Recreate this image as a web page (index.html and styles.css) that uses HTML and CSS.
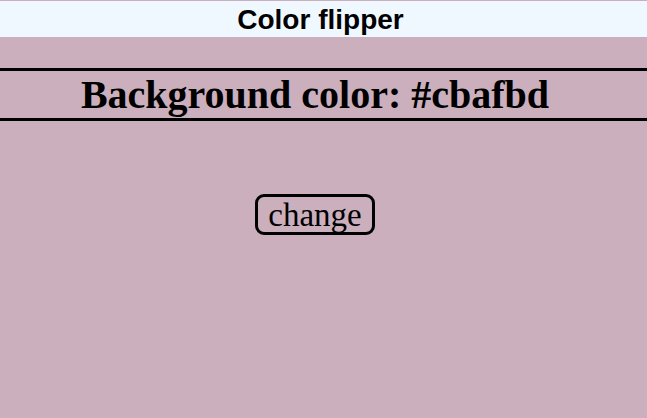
FILE: index.html
```html
<!DOCTYPE html>
<html>
<head>
<meta charset="utf-8">
<link rel="stylesheet" href="styles.css">
</head>
<body>
<header class="top-bar">Color flipper</header>
<main class="stage">
  <h1 class="color-title">Background color: #cbafbd</h1>
  <button class="change-btn">change</button>
</main>
</body>
</html>
```
FILE: styles.css
```css
html, body {
  margin: 0;
  padding: 0;
}
body {
  background: #cbafbd;
  padding-top: 1px;
  min-height: 417px;
}
.top-bar {
  background: #f0f8ff;
  height: 36px;
  box-sizing: border-box;
  padding-top: 2px;
  line-height: 34px;
  text-align: center;
  font-family: "Liberation Sans", Arial, sans-serif;
  font-weight: bold;
  font-size: 28px;
  padding-right: 6px;
  color: #000;
  overflow: hidden;
}
.stage {
  display: flex;
  flex-direction: column;
  align-items: center;
  padding-right: 17px;
}
.color-title {
  align-self: stretch;
  margin: 31px -17px 0 0;
  padding-right: 17px;
  border-top: 3px solid #000;
  border-bottom: 3px solid #000;
  font-family: "Liberation Serif", "Times New Roman", serif;
  font-weight: bold;
  font-size: 40px;
  line-height: 47px;
  text-align: center;
  color: #000;
}
.change-btn {
  margin-top: 73px;
  font-family: "Liberation Serif", "Times New Roman", serif;
  font-size: 33px;
  line-height: 33px;
  padding: 2px 10px 0;
  border: 3px solid #000;
  border-radius: 9px;
  background: transparent;
  color: #000;
}
```
